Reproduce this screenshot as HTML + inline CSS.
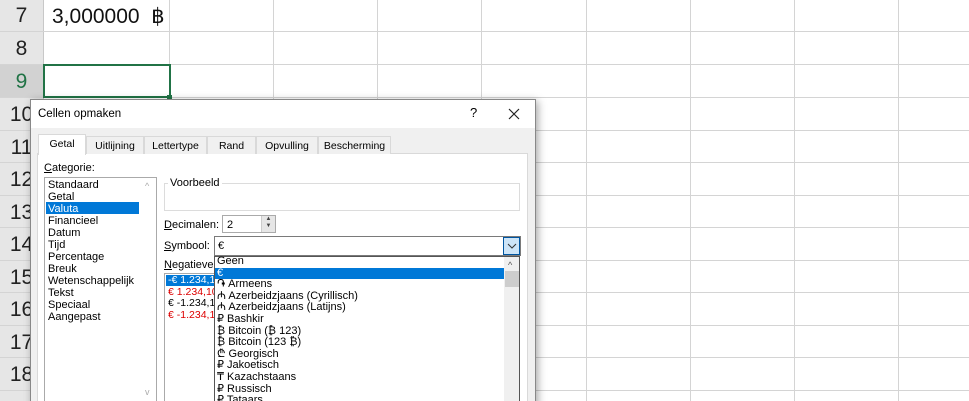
<!DOCTYPE html>
<html><head><meta charset="utf-8"><style>
*{margin:0;padding:0;box-sizing:border-box}
html,body{width:969px;height:401px;overflow:hidden}
body{background:#fff;font-family:"Liberation Sans",sans-serif;position:relative}
.a{position:absolute}
.hl{position:absolute;left:0;width:969px;height:1px;background:#d4d4d4}
.vl{position:absolute;top:0;height:401px;width:1px;background:#d4d4d4}
.rn{position:absolute;left:0;width:43px;text-align:center;font-size:21px;color:#222;font-family:"Liberation Sans",sans-serif}
.s{font-size:11px;color:#000;font-family:"Liberation Sans",sans-serif;line-height:12px;white-space:nowrap}
.tab{position:absolute;top:136px;height:18px;font-size:10.5px;font-family:"Liberation Sans",sans-serif;padding-top:3px;text-align:center;border:1px solid #d9d9d9;border-bottom:none;background:#f0f0f0;color:#000}
</style></head><body>
<div class="a" style="left:0;top:0;width:43px;height:401px;background:#e6e6e6"></div>
<div class="a" style="left:0;top:64px;width:43px;height:33px;background:#d2d2d2"></div>
<div class="vl" style="left:43px;background:#c8c8c8"></div>
<div class="vl" style="left:169px"></div><div class="vl" style="left:273px"></div><div class="vl" style="left:377px"></div><div class="vl" style="left:481px"></div><div class="vl" style="left:586px"></div><div class="vl" style="left:690px"></div><div class="vl" style="left:794px"></div><div class="vl" style="left:898px"></div>
<div class="hl" style="top:31px"></div><div class="hl" style="top:64px"></div><div class="hl" style="top:97px"></div><div class="hl" style="top:130px"></div><div class="hl" style="top:162px"></div><div class="hl" style="top:195px"></div><div class="hl" style="top:227px"></div><div class="hl" style="top:260px"></div><div class="hl" style="top:292px"></div><div class="hl" style="top:325px"></div><div class="hl" style="top:357px"></div><div class="hl" style="top:390px"></div>
<div class="rn" style="top:4px">7</div><div class="rn" style="top:37px">8</div><div class="rn" style="top:70px;color:#217346">9</div>
<div class="rn" style="top:103px">10</div><div class="rn" style="top:136px">11</div><div class="rn" style="top:168px">12</div><div class="rn" style="top:201px">13</div><div class="rn" style="top:233px">14</div><div class="rn" style="top:266px">15</div><div class="rn" style="top:298px">16</div><div class="rn" style="top:331px">17</div><div class="rn" style="top:363px">18</div>
<div class="a" style="left:52px;top:4px;font-size:21px;font-family:'Liberation Sans',sans-serif;color:#111">3,000000&nbsp;&nbsp;฿</div>
<div class="a" style="left:43px;top:64px;width:128px;height:34px;border:2px solid #217346"></div>
<div class="a" style="left:167px;top:95px;width:5px;height:5px;background:#217346"></div>

<div class="a" style="left:30px;top:99px;width:506px;height:320px;background:#f0f0f0;border:1px solid #888;box-shadow:2px 2px 8px rgba(0,0,0,.35)"></div>
<div class="a" style="left:31px;top:100px;width:504px;height:28px;background:#fff"></div>
<div class="a s" style="left:38px;top:108px;font-size:11.5px">Cellen opmaken</div>
<div class="a" style="left:470px;top:105px;font-size:13px;font-family:'Liberation Sans',sans-serif">?</div>
<svg class="a" style="left:508px;top:108px" width="12" height="12"><path d="M1 1L11 11M11 1L1 11" stroke="#222" stroke-width="1.2"/></svg>
<div class="a" style="left:37px;top:153px;width:491px;height:260px;background:#fff;border:1px solid #d9d9d9"></div>
<div class="tab" style="left:38px;top:134px;height:21px;width:48px;background:#fff">Getal</div>
<div class="tab" style="left:86px;width:58px">Uitlijning</div>
<div class="tab" style="left:144px;width:63px">Lettertype</div>
<div class="tab" style="left:207px;width:49px">Rand</div>
<div class="tab" style="left:256px;width:62px">Opvulling</div>
<div class="tab" style="left:318px;width:73px">Bescherming</div>
<div class="a s" style="left:44px;top:162px"><u>C</u>ategorie:</div>
<div class="a" style="left:44px;top:177px;width:113px;height:240px;border:1px solid #aaa;background:#fff"></div>
<div class="a s" style="left:145px;top:180px;color:#aaa;font-size:9px">&#94;</div>
<div class="a s" style="left:145px;top:386px;color:#aaa;font-size:9px">v</div>
<div class="a" style="left:46px;top:202px;width:93px;height:12px;background:#0078d7"></div>
<div class="a s" style="left:48px;top:179px">Standaard<br>Getal<br><span style="color:#fff">Valuta</span><br>Financieel<br>Datum<br>Tijd<br>Percentage<br>Breuk<br>Wetenschappelijk<br>Tekst<br>Speciaal<br>Aangepast</div>
<div class="a" style="left:164px;top:183px;width:356px;height:28px;border:1px solid #dcdcdc"></div>
<div class="a s" style="left:168px;top:177px;background:#fff;padding:0 2px">Voorbeeld</div>
<div class="a s" style="left:164px;top:219px"><u>D</u>ecimalen:</div>
<div class="a" style="left:222px;top:215px;width:54px;height:18px;border:1px solid #aaa;background:#fff"></div>
<div class="a s" style="left:227px;top:219px">2</div>
<div class="a" style="left:261px;top:216px;width:14px;height:16px;background:#e6e6e6;border-left:1px solid #ccc;font-size:6px;line-height:7px;text-align:center;color:#444">▲<br>▼</div>
<div class="a s" style="left:164px;top:240px"><u>S</u>ymbool:</div>
<div class="a" style="left:214px;top:236px;width:307px;height:20px;border:1px solid #7a7a7a;background:#fff"></div>
<div class="a s" style="left:218px;top:240px">€</div>
<div class="a" style="left:503px;top:237px;width:17px;height:18px;background:#cce4f7;border:1px solid #0055a0"></div>
<svg class="a" style="left:507px;top:243px" width="10" height="6"><path d="M1 1L5 5L9 1" stroke="#333" fill="none"/></svg>
<div class="a s" style="left:164px;top:259px"><u>N</u>egatieve</div>
<div class="a" style="left:164px;top:273px;width:52px;height:140px;border:1px solid #aaa;background:#fff"></div>
<div class="a" style="left:166px;top:275px;width:50px;height:11px;background:#0078d7"></div>
<div class="a s" style="left:168px;top:275px;font-size:10.5px;line-height:11.5px;overflow:hidden;width:48px"><span style="color:#fff">-€ 1.234,10</span><br><span style="color:#d00">€ 1.234,10</span><br>€ -1.234,10<br><span style="color:#d00">€ -1.234,10</span></div>
<div class="a" style="left:214px;top:256px;width:306px;height:160px;border:1px solid #555;background:#fff"></div>
<div class="a" style="left:504px;top:257px;width:15px;height:160px;background:#f0f0f0"></div>
<div class="a" style="left:505px;top:271px;width:14px;height:16px;background:#cdcdcd"></div>
<div class="a s" style="left:508px;top:259px;font-size:9px;color:#555">^</div>
<div class="a" style="left:215px;top:268px;width:289px;height:11px;background:#0078d7"></div>
<div class="a s" style="left:217px;top:256px;line-height:11.6px">Geen<br><span style="color:#fff">€</span><br>֏ Armeens<br>₼ Azerbeidzjaans (Cyrillisch)<br>₼ Azerbeidzjaans (Latijns)<br>₽ Bashkir<br>₿ Bitcoin (₿ 123)<br>₿ Bitcoin (123 ₿)<br>₾ Georgisch<br>₽ Jakoetisch<br>₸ Kazachstaans<br>₽ Russisch<br>₽ Tataars</div>
</body></html>
